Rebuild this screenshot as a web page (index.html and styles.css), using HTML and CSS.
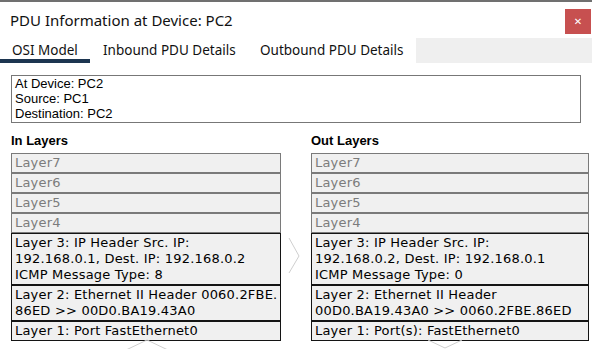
FILE: index.html
```html
<!DOCTYPE html>
<html lang="en">
<head>
  <meta charset="UTF-8">
  <title>PDU Information at Device: PC2</title>
  <link rel="stylesheet" href="styles.css">
</head>
<body>
  <div class="window">
    <div class="titlebar">
      <span class="title">PDU Information at Device: PC2</span>
      <span class="close">&#x2715;</span>
    </div>

    <div class="tabs">
      <div class="tab tab-osi active">OSI Model</div>
      <div class="tab tab-in">Inbound PDU Details</div>
      <div class="tab tab-out">Outbound PDU Details</div>
      <div class="tab-fill"></div>
    </div>

    <div class="content">
      <div class="info">
        At Device: PC2<br>
        Source: PC1<br>
        Destination: PC2
      </div>

      <div class="columns">
        <div class="column">
          <h3>In Layers</h3>
          <div class="layer off">Layer7</div>
          <div class="layer off">Layer6</div>
          <div class="layer off">Layer5</div>
          <div class="layer off">Layer4</div>
          <div class="layer on">Layer 3: IP Header Src. IP:<br>192.168.0.1, Dest. IP: 192.168.0.2<br>ICMP Message Type: 8</div>
          <div class="layer on">Layer 2: Ethernet II Header 0060.2FBE.<br>86ED &gt;&gt; 00D0.BA19.43A0</div>
          <div class="layer on">Layer 1: Port FastEthernet0</div>
        </div>
        <div class="column">
          <h3>Out Layers</h3>
          <div class="layer off">Layer7</div>
          <div class="layer off">Layer6</div>
          <div class="layer off">Layer5</div>
          <div class="layer off">Layer4</div>
          <div class="layer on">Layer 3: IP Header Src. IP:<br>192.168.0.2, Dest. IP: 192.168.0.1<br>ICMP Message Type: 0</div>
          <div class="layer on">Layer 2: Ethernet II Header<br>00D0.BA19.43A0 &gt;&gt; 0060.2FBE.86ED</div>
          <div class="layer on">Layer 1: Port(s): FastEthernet0</div>
        </div>
      </div>
    </div>

    <!-- faint navigation chevrons -->
    <svg class="chevrons" width="592" height="349" viewBox="0 0 592 349">
      <polyline points="289,238 299,256 289,273" />
      <polyline points="126,350 147,340 168,350" />
      <polyline points="428,340 445,348 462,340" />
    </svg>
  </div>
</body>
</html>
```

FILE: styles.css
```css
body {
  margin: 0;
  padding: 0;
  background: #fff;
}

.window {
  position: relative;
  width: 592px;
  height: 349px;
  border-top: 2px solid #707070;
  box-sizing: border-box;
  overflow: hidden;
}

.titlebar {
  display: flex;
  justify-content: space-between;
  align-items: flex-start;
  height: 36px;
  padding-left: 10px;
}

.title {
  margin-top: 8px;
  font-family: "Noto Sans", sans-serif;
  font-size: 15px;
  line-height: 20px;
  color: #111;
}

.close {
  margin-top: 7px;
  margin-right: 1px;
  width: 26px;
  height: 25px;
  background: #c75050;
  color: #fff;
  font-family: "DejaVu Sans", sans-serif;
  font-size: 10px;
  font-weight: bold;
  line-height: 25px;
  text-align: center;
}

.tabs {
  display: flex;
  height: 25px;
  font-family: "Noto Sans", sans-serif;
  font-size: 13.5px;
}

.tab {
  box-sizing: border-box;
  padding-top: 3px;
  padding-left: 12px;
  line-height: 19px;
  color: #111;
}

.tab-osi {
  width: 90px;
}

.tab-in {
  width: 158px;
  padding-left: 13px;
}

.tab-out {
  width: 168px;
}

.tab.active {
  border-bottom: 4px solid #1c3550;
}

.tab-fill {
  flex: 1;
  background: #efefef;
}

.content {
  padding: 12px 11px 0 11px;
}

.info {
  border: 1px solid #777;
  padding: 0 3px 1px;
  font-family: "Liberation Sans", Arial, sans-serif;
  font-size: 13px;
  line-height: 15px;
  color: #000;
}

.columns {
  display: grid;
  grid-template-columns: 270px 278px;
  column-gap: 30px;
}

.column h3 {
  margin: 10px 0 5px;
  font-family: "Liberation Sans", Arial, sans-serif;
  font-size: 13px;
  line-height: 15px;
  font-weight: bold;
  color: #000;
}

.layer {
  padding: 1px 1px 1px 3px;
  background: #f0f0f0;
  font-family: "DejaVu Sans", Verdana, sans-serif;
  font-size: 13px;
  line-height: 16px;
  letter-spacing: 0.2px;
  white-space: nowrap;
  overflow: hidden;
}

.layer.off {
  border: 1px solid #7a7a7a;
  color: #7c7c7c;
}

.layer.on {
  border: 1px solid #141414;
  color: #000;
}

.chevrons {
  position: absolute;
  top: -2px;
  left: 0;
  pointer-events: none;
}

.chevrons polyline {
  fill: none;
  stroke: #cfcfcf;
  stroke-width: 1;
}
```
